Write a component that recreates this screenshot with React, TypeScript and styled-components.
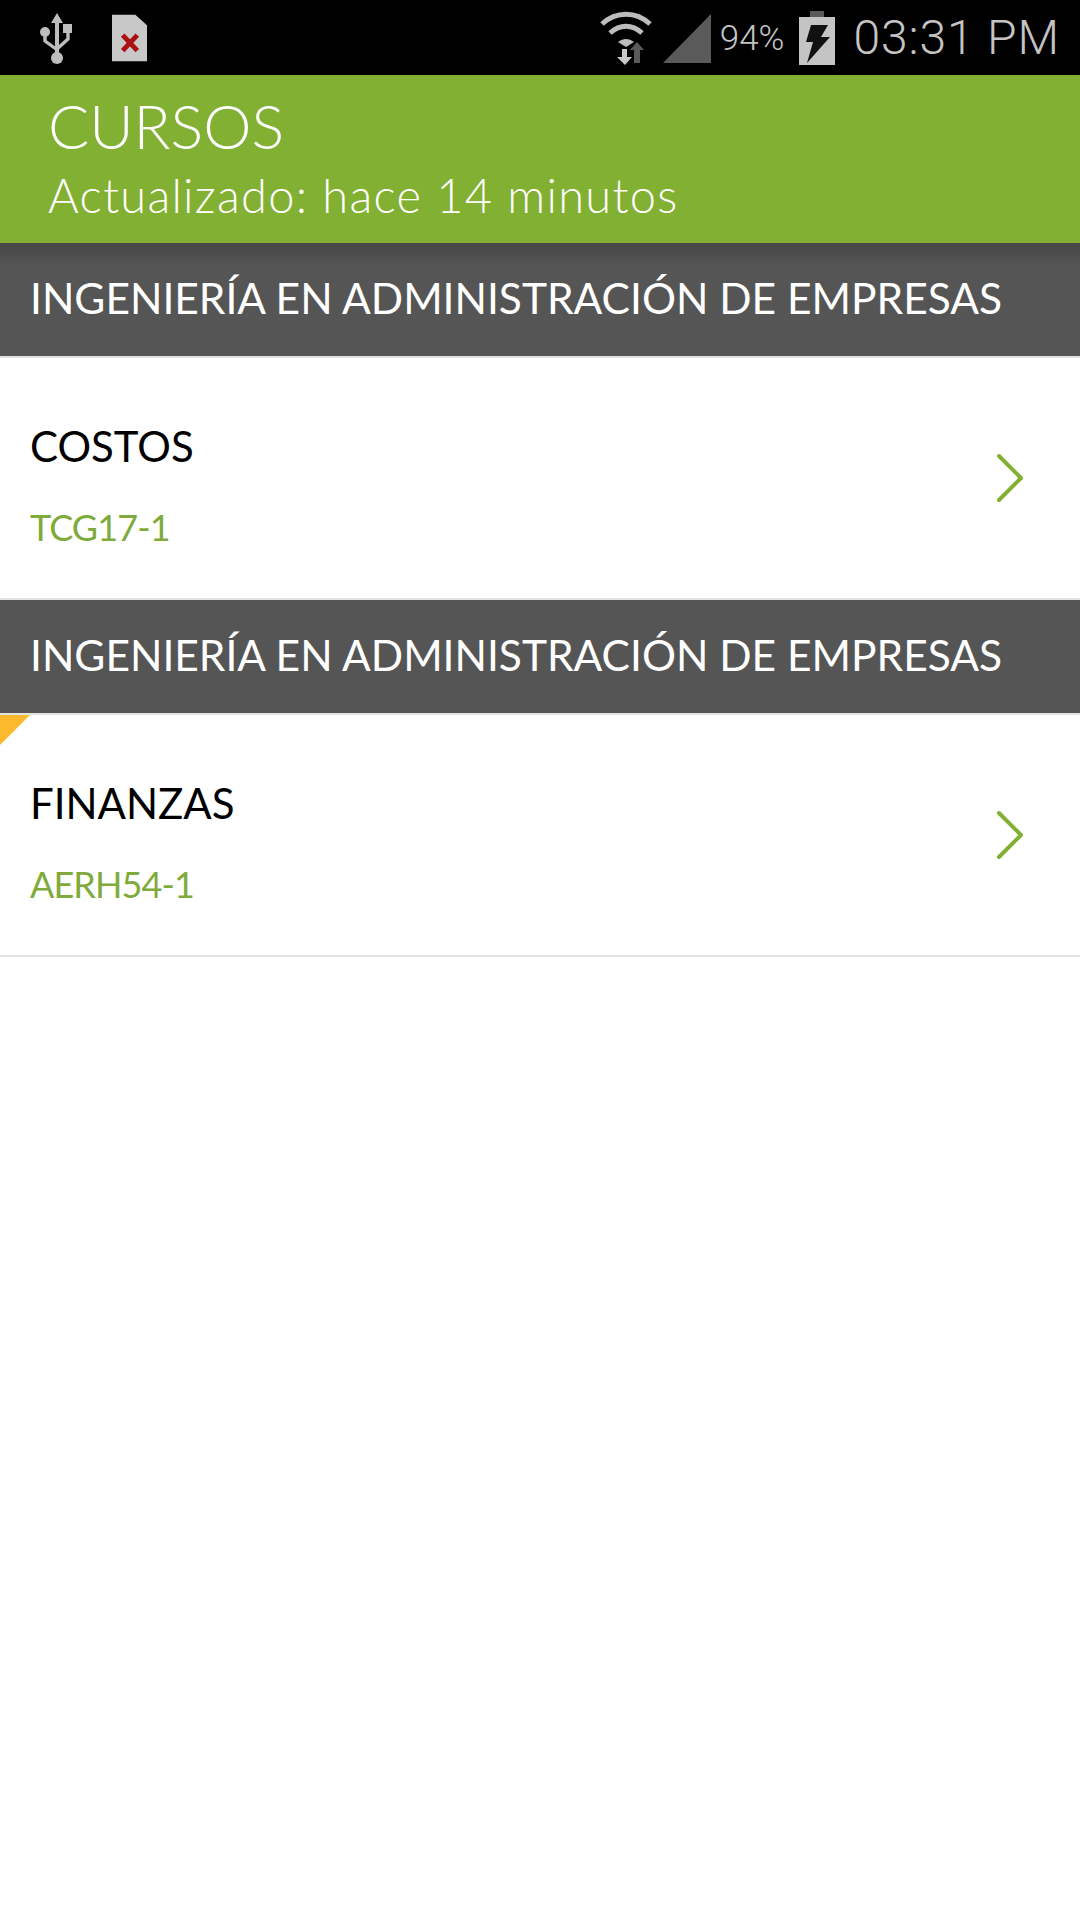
import styled, { createGlobalStyle } from 'styled-components';

const GlobalStyle = createGlobalStyle`
  html, body {
    margin: 0;
    padding: 0;
    background: #fff;
  }
  * {
    box-sizing: border-box;
  }
`;

const Page = styled.div`
  width: 1080px;
  height: 1920px;
  background: #fff;
  font-family: Lato, "Open Sans", sans-serif;
  overflow: hidden;
`;

const StatusBar = styled.div`
  height: 75px;
  background: #000;
  display: flex;
  align-items: center;
  justify-content: space-between;
  padding: 0 20px 0 39px;
`;

const StatusGroup = styled.div`
  display: flex;
  align-items: center;
`;

const StatusPercent = styled.span`
  font: 300 35px Roboto, sans-serif;
  color: #c4c4c4;
  margin: 2px 15px 0 9px;
`;

const StatusClock = styled.span`
  font: 300 48px Roboto, sans-serif;
  color: #c4c4c4;
  margin: 0 0 0 18px;
  letter-spacing: 0.9px;
`;

const Header = styled.header`
  height: 168px;
  background: #82b032;
  padding: 14px 0 0 48px;
  color: #fff;
`;

const HeaderTitle = styled.div`
  font-size: 61px;
  font-weight: 300;
  line-height: 74px;
`;

const HeaderSub = styled.div`
  font-size: 47px;
  font-weight: 300;
  line-height: 64px;
  letter-spacing: 1.28px;
`;

const SectionBar = styled.div<{ $first?: boolean }>`
  height: 115px;
  padding: 0 0 5px 30px;
  display: flex;
  align-items: center;
  color: #fff;
  font-size: 42.5px;
  border-bottom: 2px solid #e2e2e2;
  background: ${(p) => (p.$first ? 'linear-gradient(#464646, #555 22px)' : '#555')};
`;

const CourseRow = styled.div`
  position: relative;
  height: 242px;
  display: flex;
  align-items: center;
  justify-content: space-between;
  padding: 0 56px 0 30px;
  border-bottom: 2px solid #e2e2e2;
`;

const CourseInfo = styled.div`
  display: flex;
  flex-direction: column;
  gap: 32px;
  padding-top: 14px;
`;

const CourseName = styled.div`
  font-size: 42px;
  line-height: 52px;
  color: #000;
`;

const CourseCode = styled.div`
  font-size: 36px;
  line-height: 46px;
  letter-spacing: -0.9px;
  color: #7fab3c;
`;

const Flag = styled.div`
  position: absolute;
  top: 0;
  left: 0;
  width: 0;
  height: 0;
  border-top: 30px solid #fdb92e;
  border-right: 30px solid transparent;
`;

const UsbIcon = () => (
  <svg width="34" height="52" viewBox="0 0 34 52">
    <path d="M18 1l6 10h-4v24h-4V11h-4z" fill="#bdbdbd" />
    <circle cx="18" cy="46" r="6" fill="#bdbdbd" />
    <circle cx="6" cy="20" r="5" fill="#bdbdbd" />
    <rect x="24" y="12" width="9" height="9" fill="#bdbdbd" />
    <path d="M6 22v7l11 8M29 20v7l-11 10" stroke="#bdbdbd" strokeWidth="3.4" fill="none" />
    <rect x="16" y="35" width="4" height="7" fill="#bdbdbd" />
  </svg>
);

const SimIcon = () => (
  <svg width="35" height="48" viewBox="0 0 36 48" style={{ marginLeft: 39 }}>
    <path d="M0 0h24l12 11v37H0z" fill="#c8c8c8" />
    <path d="M11 21l15 16M26 21L11 37" stroke="#ab0f0f" strokeWidth="5" />
  </svg>
);

const WifiIcon = () => (
  <svg width="52" height="54" viewBox="0 0 52 54">
    <path d="M2 13C16 0 36 0 50 13" stroke="#bdbdbd" strokeWidth="5" fill="none" />
    <path d="M10 22C20 13 32 13 42 22" stroke="#bdbdbd" strokeWidth="5" fill="none" />
    <path d="M18 31c5-4 11-4 16 0l-8 5z" fill="#bdbdbd" />
    <path d="M22 38h5v8h5l-7 8-8-8h5z" fill="#c8c8c8" />
    <path d="M37 31l7 8h-4v13h-6V39h-4z" fill="#5a5a5a" />
  </svg>
);

const SignalIcon = () => (
  <svg width="48" height="49" viewBox="0 0 48 49" style={{ marginLeft: 11, marginTop: 2 }}>
    <path d="M48 0v49H0z" fill="#5a5a5a" />
  </svg>
);

const BatteryIcon = () => (
  <svg width="36" height="54" viewBox="0 0 36 54">
    <rect x="11" y="0" width="14" height="6" fill="#5a5a5a" />
    <rect x="0" y="6" width="36" height="48" fill="#c4c4c4" />
    <path d="M12 14h17l-7 12h9L8 52l6-21H7z" fill="#111" />
  </svg>
);

const Chevron = () => (
  <svg width="28" height="50" viewBox="0 0 28 50">
    <path d="M3 3l22 22L3 47" stroke="#82b032" strokeWidth="4" strokeLinecap="round" strokeLinejoin="round" fill="none" />
  </svg>
);

const courses = [
  { name: 'COSTOS', code: 'TCG17-1', flagged: false },
  { name: 'FINANZAS', code: 'AERH54-1', flagged: true },
];

export default function App() {
  return (
    <Page>
      <GlobalStyle />
      <StatusBar>
        <StatusGroup>
          <UsbIcon />
          <SimIcon />
        </StatusGroup>
        <StatusGroup>
          <WifiIcon />
          <SignalIcon />
          <StatusPercent>94%</StatusPercent>
          <BatteryIcon />
          <StatusClock>03:31 PM</StatusClock>
        </StatusGroup>
      </StatusBar>
      <Header>
        <HeaderTitle>CURSOS</HeaderTitle>
        <HeaderSub>Actualizado: hace 14 minutos</HeaderSub>
      </Header>
      {courses.map((c, i) => (
        <div key={c.code}>
          <SectionBar $first={i === 0}>INGENIERÍA EN ADMINISTRACIÓN DE EMPRESAS</SectionBar>
          <CourseRow>
            {c.flagged && <Flag />}
            <CourseInfo>
              <CourseName>{c.name}</CourseName>
              <CourseCode>{c.code}</CourseCode>
            </CourseInfo>
            <Chevron />
          </CourseRow>
        </div>
      ))}
    </Page>
  );
}
